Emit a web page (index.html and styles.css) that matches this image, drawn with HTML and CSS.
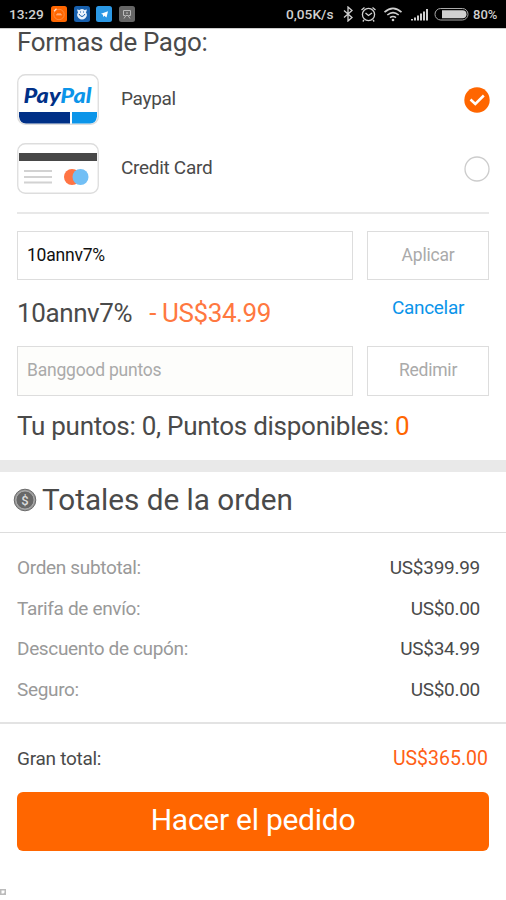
FILE: index.html
```html
<!DOCTYPE html>
<html lang="es">
<head>
<meta charset="utf-8">
<title>Formas de Pago</title>
<link rel="stylesheet" href="styles.css">
</head>
<body>
<header class="status">
  <span class="clock">13:29</span>
  <svg class="apps" width="84" height="16" viewBox="0 0 84 16">
    <rect width="16" height="16" rx="2.5" fill="#ff6600"/>
    <circle cx="8" cy="8.5" r="5.2" fill="none" stroke="#ff9855" stroke-width=".7"/>
    <path d="M3 5.2 5.5 2.8" stroke="#ffe0cc" stroke-width="1.2"/>
    <path d="M6 9.5V8h4v1.500M8 8v1.500" fill="none" stroke="#ffc39c"/>
    <rect x="23" width="16" height="16" rx="2.5" fill="#1760ae"/>
    <path d="M26 3.500 28.500 4Q31 2 33.500 4L36 3.500 35 6.500Q37 9 34.500 12Q31 15 27.500 12Q25 9 27 6.500Z" fill="#e9f2fc"/>
    <path d="M28 8Q31 13 34 8M29 6h1M32 6h1" fill="none" stroke="#1760ae"/>
    <rect x="45" width="16" height="16" rx="2.5" fill="#2b98e5"/>
    <path d="m50 7.800 7-2.600-1.500 6.300-2.200-1.800-1.300 1.300V8.700Z" fill="#fff"/>
    <rect x="68" width="16" height="16" rx="2.5" fill="#666"/>
    <path d="M72.500 9.500V4.500h7v5h-2M72.500 9.500h2M73 12.500l2-3h2l2 3M75 7h2" fill="none" stroke="#bbb"/>
  </svg>
  <span class="speed">0,05K/s</span>
  <svg class="system" width="127" height="16" viewBox="0 0 127 16" fill="none" stroke="#d0d0d0">
    <path d="m1 4.500 8 7L5 15V1l4 3.500-8 7" stroke-width="1.300"/>
    <circle cx="25.500" cy="8.500" r="6.100" stroke-width="1.300"/>
    <path d="m18.500 4 3-2.500m8 0 3 2.500M22.500 7l3 2.500L29 7M21 14l-1.200 1.500m10.200-1.500 1.200 1.500" stroke-width="1.300"/>
    <path d="M41.500 6.200q8.500-7.600 17 0M44.300 9q5.700-4.900 11.400 0M47 11.700q3-2.400 6 0" stroke-width="1.600"/>
    <circle cx="50" cy="14" r="1.300" fill="#d0d0d0" stroke="none"/>
    <path d="M69 14.500v-1.500M72 14.500v-3M75 14.500v-5M78 14.500v-7M81 14.500v-9M84 14.500v-11.500" stroke-width="2"/>
    <rect x="92" y="2.500" width="33" height="11.500" rx="5.700" stroke="#aaa"/>
    <path d="M99 4.200h20.500a4 4 0 0 1 0 8H99z" fill="#d0d0d0" stroke="none"/>
  </svg>
  <span class="level">80%</span>
</header>
<main>
  <section class="payment">
    <h1>Formas de Pago:</h1>
    <div class="method">
      <svg class="card" width="82" height="51" viewBox="0 0 82 51">
        <rect x=".75" y=".75" width="80.500" height="49.500" rx="7.500" fill="#fff" stroke="#ddd" stroke-width="1.300"/>
        <path d="M2 38h51v11.500H9q-6 0-7-7z" fill="#003087"/>
        <path d="M55 38h25v4.500q-1 7-7 7H55z" fill="#0c95e9"/>
        <text class="brand" x="6.500" y="29" textLength="68" lengthAdjust="spacingAndGlyphs"><tspan fill="#003087">Pay</tspan><tspan fill="#0c95e9">Pal</tspan></text>
      </svg>
      <span class="name">Paypal</span>
      <svg class="radio" width="26" height="26" viewBox="0 0 26 26"><circle cx="13" cy="13" r="12.700" fill="#ff6600"/><path d="m6.500 12.500 4.800 4.500 8.500-8.500" fill="none" stroke="#fff" stroke-width="2.500"/></svg>
    </div>
    <div class="method">
      <svg class="card" width="82" height="51" viewBox="0 0 82 51">
        <rect x=".75" y=".75" width="80.500" height="49.500" rx="7.500" fill="#fff" stroke="#ddd" stroke-width="1.300"/>
        <path d="M2 10h78v8H2z" fill="#484848"/>
        <path d="M7 28h28M7 34h28M7 39.500h28" stroke="#d2d2d2" stroke-width="2"/>
        <circle cx="55" cy="34" r="8" fill="#ff7444"/>
        <circle cx="63.500" cy="34" r="8" fill="#72bff5"/>
      </svg>
      <span class="name">Credit Card</span>
      <svg class="radio" width="26" height="26" viewBox="0 0 26 26"><circle cx="13" cy="13" r="12" fill="#fff" stroke="#ccc" stroke-width="1.300"/></svg>
    </div>
    <div class="redeem coupon">
      <div class="field filled">10annv7%</div>
      <div class="action">Aplicar</div>
    </div>
    <div class="applied">
      <div class="discount"><span>10annv7%</span><span class="amount">- US$34.99</span></div>
      <a class="cancel">Cancelar</a>
    </div>
    <div class="redeem points">
      <div class="field empty">Banggood puntos</div>
      <div class="action">Redimir</div>
    </div>
    <p class="balance">Tu puntos: 0, Puntos disponibles: <b>0</b></p>
  </section>
  <section class="totals">
    <h2>
      <svg width="24" height="24" viewBox="0 0 24 24"><circle cx="12" cy="12" r="10.800" fill="#999" stroke="#6b6b6b"/><circle cx="12" cy="12" r="9" fill="#686868" stroke="#bbb" stroke-width=".7"/><text class="coin" x="12" y="16.500">$</text></svg>
      <span>Totales de la orden</span>
    </h2>
    <dl>
      <div><dt>Orden subtotal:</dt><dd>US$399.99</dd></div>
      <div><dt>Tarifa de envío:</dt><dd>US$0.00</dd></div>
      <div><dt>Descuento de cupón:</dt><dd>US$34.99</dd></div>
      <div><dt>Seguro:</dt><dd>US$0.00</dd></div>
    </dl>
    <div class="grand"><span>Gran total:</span><strong>US$365.00</strong></div>
    <button>Hacer el pedido</button>
  </section>
</main>
<svg class="corner" width="6" height="6" viewBox="0 0 6 6"><path d="M0 0h6v6H0z" fill="#bbb"/><path d="M1.500 1.500h3v2l-1 1h-2z" fill="#fff"/></svg>
</body>
</html>
```
FILE: styles.css
```css
* { box-sizing: border-box; }
body { margin: 0; width: 506px; height: 900px; overflow: hidden; display: flex; flex-direction: column; background: #fff; color: #4a4a4a; font-family: Roboto, sans-serif; }
h1, h2, p, dl, dd { margin: 0; font-weight: 400; }
svg { flex: none; display: block; }
span, strong { white-space: nowrap; }

.status { height: 29px; flex: none; display: flex; align-items: center; padding: 0 8px 0 9px; background: #000; border-bottom: 1px solid #ccc; color: #d0d0d0; font-size: 13.7px; font-weight: 500; }
.clock { width: 42px; }
.speed { margin-left: auto; width: 57px; }
.level { margin-left: 3px; width: 25px; font-size: 13px; }

.payment { padding: 0 17px; height: 431px; }
h1 { height: 45px; font-size: 26px; line-height: 26px; letter-spacing: -.35px; }
.method { height: 51px; display: flex; align-items: center; margin-bottom: 18px; font-size: 19px; letter-spacing: -.3px; }
.name { margin-left: 22px; line-height: 24px; padding-bottom: 1px; }
.radio { margin-left: auto; margin-right: -1px; }
.brand { font: italic 900 21px Lato, sans-serif; letter-spacing: 0; }
.redeem { display: flex; gap: 14px; height: 50px; font-size: 17.5px; letter-spacing: -.22px; }
.coupon { margin-top: 37px; height: 49px; position: relative; }
.coupon::before { content: ""; position: absolute; top: -19px; left: 0; right: 0; height: 2px; background: #e8e8e8; }
.field { width: 336px; display: flex; align-items: center; padding: 0 9px 2px; border: 1.5px solid #ddd; }
.filled { color: #111; }
.empty { background: #fdfdfb; color: #aaa; }
.action { width: 122px; display: flex; align-items: center; justify-content: center; padding-bottom: 2px; border: 1.5px solid #ddd; color: #aaa; }
.applied { display: flex; height: 66px; }
.discount { width: 350px; line-height: 66px; font-size: 26px; letter-spacing: -.4px; }
.amount { margin-left: 17px; color: #ff7840; }
.cancel { flex: 1; text-align: center; line-height: 55px; font-size: 19px; letter-spacing: -.3px; color: #0a94ea; }
.balance { line-height: 60px; font-size: 26px; letter-spacing: -.27px; }
.balance b { font-weight: 400; color: #ff6600; }

.totals { border-top: 12px solid #e9e9e9; }
h2 { height: 61px; display: flex; align-items: center; gap: 5px; padding: 0 13px 5px; border-bottom: 1px solid #ddd; font-size: 29.7px; }
.coin { font: 500 13px Roboto, sans-serif; fill: #ddd; text-anchor: middle; }
dl { height: 191px; padding: 14px 26px 0 17px; border-bottom: 2px solid #e3e3e3; }
dl div { height: 40.800px; display: flex; align-items: center; justify-content: space-between; font-size: 19px; letter-spacing: -.34px; }
dt { color: #999; }
dd { letter-spacing: -.28px; }
.grand { height: 68px; padding: 1px 18px 0 17px; display: flex; align-items: center; justify-content: space-between; font-size: 19px; letter-spacing: -.28px; }
strong { font-size: 19.5px; letter-spacing: 0; font-weight: 400; color: #ff6015; }
button { display: flex; justify-content: center; align-items: center; width: 472px; height: 59px; margin: 0 17px; padding: 0 0 4px; border: 0; border-radius: 6px; background: #ff6600; color: #fff; font: 400 30px Roboto, sans-serif; letter-spacing: -.27px; }
.corner { position: absolute; left: 0; top: 889px; }
```
